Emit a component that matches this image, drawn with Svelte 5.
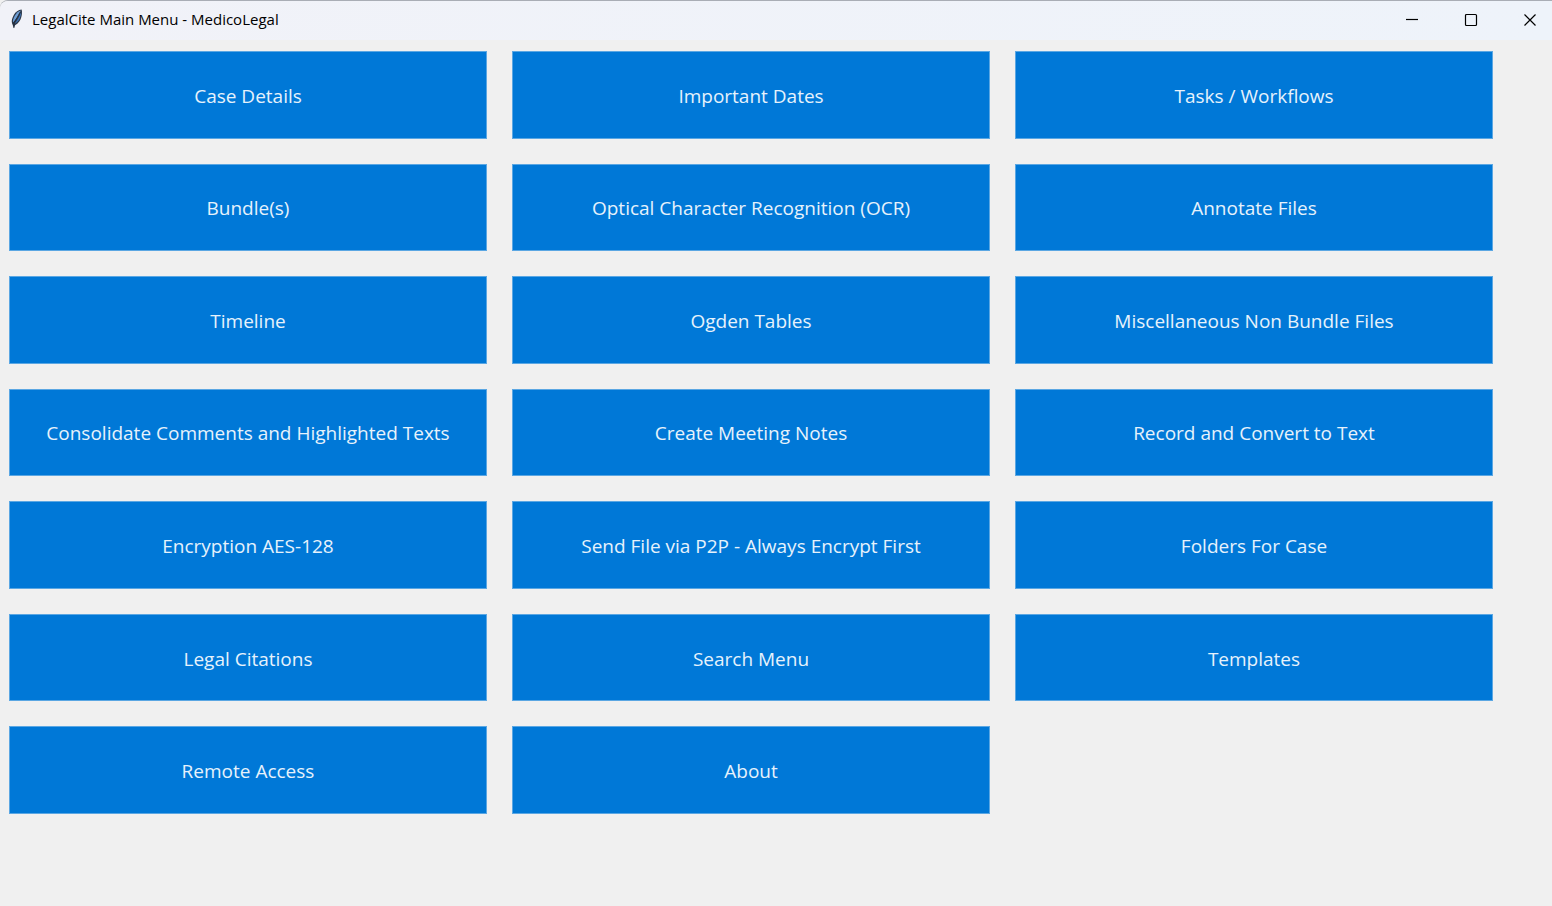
<!-- App.svelte -->
<script lang="ts">
  const title = 'LegalCite Main Menu - MedicoLegal';

  const menuItems: string[] = [
    'Case Details',
    'Important Dates',
    'Tasks / Workflows',
    'Bundle(s)',
    'Optical Character Recognition (OCR)',
    'Annotate Files',
    'Timeline',
    'Ogden Tables',
    'Miscellaneous Non Bundle Files',
    'Consolidate Comments and Highlighted Texts',
    'Create Meeting Notes',
    'Record and Convert to Text',
    'Encryption AES-128',
    'Send File via P2P - Always Encrypt First',
    'Folders For Case',
    'Legal Citations',
    'Search Menu',
    'Templates',
    'Remote Access',
    'About'
  ];
</script>

<div class="window">
  <header class="title-bar">
    <svg class="app-icon" width="16" height="20" viewBox="0 0 16 20" aria-hidden="true">
      <path d="M12.6 0.600C9.500 0.800 6.500 3 4.800 6C3.200 9 2.300 11.500 3 14.300L5 19.200L6 16.200C9.500 14.500 11.400 11.500 12.200 8.500C13 6 13.400 3 12.600 0.600Z" fill="#2c3646"/>
      <path d="M11.800 1.600C9.500 2.200 7.200 4.200 5.800 6.800C4.500 9.300 3.600 11.600 4 13.600C7 10.500 9.500 6.500 11.800 1.600Z" fill="#6f9fd6"/>
      <path d="M12.200 3C10.500 7.200 8 11.500 5.600 14.800C8.700 13.300 10.400 10.800 11.200 8.200C11.900 6.200 12.300 4.700 12.200 3Z" fill="#3d74b8"/>
      <path d="M11 3.200C9 7.400 7 10.500 5 13.600L4.800 18.800" fill="none" stroke="#1e2838" stroke-width="0.8"/>
    </svg>
    <h1>{title}</h1>
    <div class="window-controls">
      <button aria-label="Minimize">
        <svg width="14" height="14" viewBox="0 0 14 14">
          <path d="M1 6.500H13" />
        </svg>
      </button>
      <button aria-label="Maximize">
        <svg width="14" height="14" viewBox="0 0 14 14">
          <rect x="1.500" y="1.500" width="11" height="11" rx="1" />
        </svg>
      </button>
      <button aria-label="Close">
        <svg width="14" height="14" viewBox="0 0 14 14">
          <path d="M1.500 1.500L12.500 12.500M12.500 1.500L1.500 12.500" />
        </svg>
      </button>
    </div>
  </header>

  <main class="menu-grid">
    {#each menuItems as item}
      <button class="menu-btn">{item}</button>
    {/each}
  </main>
</div>

<style>
  :global(body) {
    margin: 0;
    background: #f0f0f0;
  }

  .window {
    display: flex;
    flex-direction: column;
    min-height: 100vh;
    box-sizing: border-box;
    background: #f0f0f0;
    border-top: 1px solid #a9adb5;
    border-top-left-radius: 8px;
    font-family: "Open Sans", "Noto Sans", sans-serif;
  }

  .title-bar {
    display: flex;
    align-items: center;
    box-sizing: border-box;
    height: 39px;
    padding: 0 0 3px 9px;
    background: linear-gradient(90deg, #f1f2f8, #eef3fa);
    border-top-left-radius: 8px;
  }

  h1 {
    margin: 0 0 0 7px;
    font-size: 15px;
    font-weight: 400;
    line-height: 20px;
    color: #000000;
  }

  .window-controls {
    display: flex;
    gap: 15px;
    align-self: stretch;
    margin-left: auto;
  }

  .window-controls button {
    display: flex;
    align-items: center;
    justify-content: center;
    width: 44px;
    padding: 2px 0 0;
    border: none;
    background: transparent;
  }

  .window-controls button:hover {
    background: #e2e6ee;
  }

  .window-controls svg {
    fill: none;
    stroke: #000000;
    stroke-width: 1.2;
  }

  .menu-grid {
    flex: 1;
    display: grid;
    grid-template-columns: repeat(3, 1fr);
    grid-auto-rows: 1fr;
    gap: 25px;
    padding: 11px 59px 92px 9px;
  }

  .menu-btn {
    min-height: 60px;
    padding: 2px 8px 0;
    border: 1px solid #5ba7e3;
    background: #0078d7;
    color: #e6f2fc;
    font-family: inherit;
    font-size: 19px;
    line-height: 26px;
    cursor: pointer;
  }

  .menu-btn:hover {
    background: #005a9e;
  }
</style>
